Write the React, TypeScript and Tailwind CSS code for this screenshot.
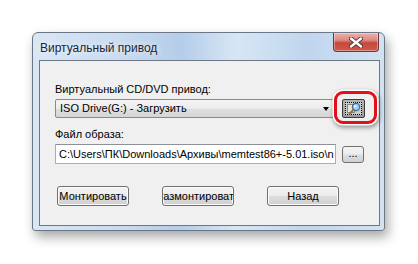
import React from 'react';

const ui = { fontFamily: '"Liberation Sans", Arial, sans-serif' };

function WinButton({ label, className = '' }: { label: string; className?: string }) {
  return (
    <div
      className={`flex h-[20px] w-[72px] items-center justify-center overflow-hidden whitespace-nowrap rounded-[3px] border border-[#707070] bg-[linear-gradient(#f3f3f3_0%,#ececec_48%,#dddddd_52%,#d0d0d0_100%)] text-[11px] text-black shadow-[inset_0_0_0_1px_#fcfcfc] ${className}`}
    >
      {label}
    </div>
  );
}

function CloseGlyph() {
  return (
    <svg width="14" height="11" viewBox="0 0 14 11">
      <path d="M2 1.5 L12 9.5 M12 1.5 L2 9.5" stroke="#4a3a3a" strokeWidth="4.2" strokeLinecap="round" />
      <path d="M2 1.5 L12 9.5 M12 1.5 L2 9.5" stroke="#ffffff" strokeWidth="2.4" strokeLinecap="round" />
    </svg>
  );
}

function BrowseIcon() {
  return (
    <svg width="14" height="13" viewBox="0 0 14 13">
      <rect x="0.5" y="2.5" width="7" height="8" fill="#e9e4d4" stroke="#8a8a7a" />
      <circle cx="9" cy="5" r="3.6" fill="#a9cdef" stroke="#3c6e9e" strokeWidth="1.2" />
      <circle cx="8.2" cy="4.2" r="1.2" fill="#e8f3fd" />
      <path d="M6.6 7.6 L2.6 11.8" stroke="#9a6a34" strokeWidth="2" strokeLinecap="round" />
    </svg>
  );
}

export default function App() {
  return (
    <div className="h-[264px] w-[418px] bg-white pl-[32px] pt-[32px]" style={ui}>
      <div className="flex h-[199px] w-[353px] flex-col rounded-t-[6px] rounded-b-[3px] border border-[#6b7786] bg-[linear-gradient(90deg,#d9e6f4_0%,#c9dbf0_25%,#b4cdea_42%,#d7e6f5_58%,#c0d6ee_78%,#d3e2f2_100%)] shadow-[3px_6px_12px_rgba(0,0,0,0.35)]">
        {/* title bar */}
        <div className="flex h-[27px] shrink-0 items-start justify-between">
          <div className="pl-[7px] pt-[8px] text-[12px] leading-[14px] text-[#1a2533] [text-shadow:0_0_6px_#ffffff]">
            Виртуальный привод
          </div>
          <div className="mr-[5px] flex h-[19px] w-[46px] items-center justify-center rounded-b-[4px] border border-t-0 border-[#6a3a34] bg-[linear-gradient(#eab2aa_0%,#dc8a80_40%,#c9473c_55%,#cf5a4c_100%)] shadow-[inset_0_0_0_1px_rgba(255,255,255,0.35)]">
            <CloseGlyph />
          </div>
        </div>

        {/* client area */}
        <div className="mb-[4px] ml-[6px] mr-[4px] flex flex-1 flex-col border border-[#6d7886] bg-[#f0f0f0] pl-[15px] text-[11px] text-black">
          <div className="mt-[22px] leading-[13px]">Виртуальный CD/DVD привод:</div>

          <div className="mt-[3px] flex items-center">
            <div className="flex h-[19px] w-[280px] items-center justify-between rounded-[2px] border border-[#8a8a8a] bg-[linear-gradient(#f4f4f4_0%,#ececec_50%,#dfdfdf_52%,#d6d6d6_100%)] pl-[4px] pr-[5px]">
              <span>ISO Drive(G:) - Загрузить</span>
              <span className="h-0 w-0 border-x-[3.5px] border-t-[4px] border-x-transparent border-t-black" />
            </div>
            <div className="relative ml-[7px]">
              <div className="flex h-[19px] w-[23px] items-center justify-center rounded-[2px] border border-[#3c3c3c] bg-[linear-gradient(#b4b4b4,#9c9c9c)] p-[2px]">
                <div className="flex h-full w-full items-center justify-center border border-dotted border-black bg-[#c8ccd2]">
                  <BrowseIcon />
                </div>
              </div>
              <div className="pointer-events-none absolute left-[-8px] top-[-8px] h-[33px] w-[43px] rounded-[9px] border-[3px] border-[#e3101c] shadow-[0_0_0_1.5px_#ffffff,1px_2px_4px_2px_rgba(0,0,0,0.35)]" />
            </div>
          </div>

          <div className="mt-[10px] leading-[13px]">Файл образа:</div>

          <div className="mt-[3px] flex items-center">
            <div className="flex h-[20px] w-[281px] items-center overflow-hidden whitespace-nowrap border border-[#abadb3] border-t-[#8e9098] bg-white pl-[3px]">
              <span className="min-w-0 overflow-hidden">C:\Users\ПК\Downloads\Архивы\memtest86+-5.01.iso\n</span>
            </div>
            <div className="ml-[6px] flex h-[17px] w-[22px] items-start justify-center rounded-[3px] border border-[#707070] bg-[linear-gradient(#f3f3f3_0%,#ececec_48%,#dddddd_52%,#d0d0d0_100%)] text-[11px] leading-[12px]">
              ...
            </div>
          </div>

          <div className="mt-[22px] flex gap-[33px] pl-[2px]">
            <WinButton label="Монтировать" />
            <WinButton label="Размонтировать" className="w-[71px]" />
            <WinButton label="Назад" />
          </div>
        </div>
      </div>
    </div>
  );
}
